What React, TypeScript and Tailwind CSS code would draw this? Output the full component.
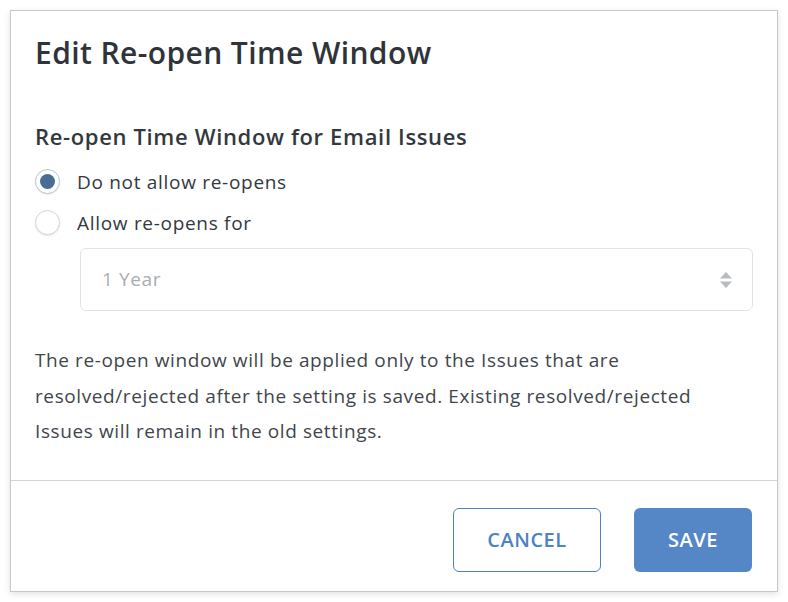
export default function App() {
  return (
    <div className="min-h-screen bg-white p-[10px]" style={{ fontFamily: "'Open Sans', Lato, sans-serif" }}>
      <div className="w-[768px] h-[582px] bg-white border border-[#c8c8c8] shadow-[0_2px_6px_rgba(0,0,0,0.12)] flex flex-col">
        {/* Header */}
        <div className="px-[24px] pt-[24px]">
          <h1 className="text-[30px] leading-[36px] font-semibold text-[#2f343a] tracking-[0.4px]">Edit Re-open Time Window</h1>
        </div>

        {/* Body */}
        <div className="px-[24px] pt-[50px] flex-1">
          <h2 className="text-[22px] leading-[30px] font-semibold text-[#33383e] tracking-[0.65px]">Re-open Time Window for Email Issues</h2>

          <div className="mt-[18px] flex flex-col gap-[16px]">
            <label className="flex items-center gap-[17px]">
              <span className="w-[25px] h-[25px] rounded-full border border-[#b7c6d8] bg-white flex items-center justify-center shadow-[0_1px_2px_rgba(0,0,0,0.08)]">
                <span className="w-[15px] h-[15px] rounded-full bg-[#4a6d96]" />
              </span>
              <span className="text-[19px] leading-[24px] text-[#33383e] tracking-[0.7px]">Do not allow re-opens</span>
            </label>
            <label className="flex items-center gap-[17px]">
              <span className="w-[25px] h-[25px] rounded-full border border-[#cfd6df] bg-white shadow-[0_1px_2px_rgba(0,0,0,0.1)]" />
              <span className="text-[19px] leading-[24px] text-[#33383e] tracking-[0.7px]">Allow re-opens for</span>
            </label>
          </div>

          <div className="ml-[45px] mt-[13px] h-[63px] border border-[#e3e3e3] rounded-[6px] flex items-center justify-between pl-[21px] pr-[19px]">
            <span className="text-[19px] text-[#a9adb2] tracking-[0.6px]">1 Year</span>
            <svg width="14" height="18" viewBox="0 0 14 18">
              <path d="M7 1 L13 7.5 H1 Z" fill="#b8bcc1" />
              <path d="M7 17 L13 10.5 H1 Z" fill="#b8bcc1" />
            </svg>
          </div>

          <p className="mt-[32px] text-[19px] leading-[35.5px] text-[#41464c] tracking-[0.6px] pr-[40px]">
            The re-open window will be applied only to the Issues that are resolved/rejected after the setting is saved. Existing resolved/rejected Issues will remain in the old settings.
          </p>
        </div>

        {/* Footer */}
        <div className="border-t border-[#d4d4d4] h-[111px] flex items-start justify-end gap-[33px] px-[25px] pt-[27px]">
          <button className="w-[148px] h-[64px] border-[1.5px] border-[#4d82c4] rounded-[6px] text-[#4d82c4] text-[20px] font-semibold tracking-[0.5px]">
            CANCEL
          </button>
          <button className="w-[118px] h-[64px] bg-[#5586c6] rounded-[6px] text-white text-[20px] font-semibold tracking-[0.5px]">
            SAVE
          </button>
        </div>
      </div>
    </div>
  );
}
